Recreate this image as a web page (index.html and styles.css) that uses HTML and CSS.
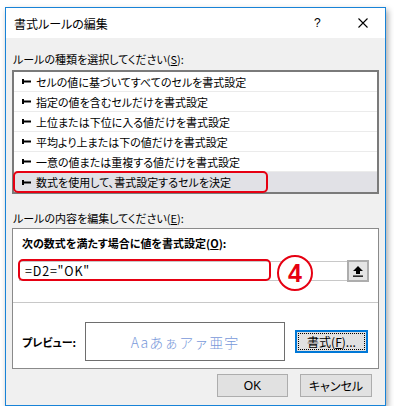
FILE: index.html
```html
<!DOCTYPE html>
<html lang="ja">
<head>
<meta charset="utf-8">
<link rel="stylesheet" href="styles.css">
</head>
<body>
<div class="dialog">
  <div class="titlebar">
    <span class="title">書式ルールの編集</span>
    <span class="help">?</span>
    <svg class="close" width="10" height="10" viewBox="0 0 10 10"><path d="M0.5 0.5L9.5 9.5M9.5 0.5L0.5 9.5" stroke="#000" stroke-width="1.1" fill="none"/></svg>
  </div>
  <div class="body">
    <div class="label">ルールの種類を選択してください(<u>S</u>):</div>
    <ul class="list">
      <li><svg class="mk" width="9" height="7" viewBox="0 0 9 7"><rect x="0" y="1" width="2" height="5"/><rect x="0" y="2.5" width="9" height="2"/></svg>セルの値に基づいてすべてのセルを書式設定</li>
      <li><svg class="mk" width="9" height="7" viewBox="0 0 9 7"><rect x="0" y="1" width="2" height="5"/><rect x="0" y="2.5" width="9" height="2"/></svg>指定の値を含むセルだけを書式設定</li>
      <li><svg class="mk" width="9" height="7" viewBox="0 0 9 7"><rect x="0" y="1" width="2" height="5"/><rect x="0" y="2.5" width="9" height="2"/></svg>上位または下位に入る値だけを書式設定</li>
      <li><svg class="mk" width="9" height="7" viewBox="0 0 9 7"><rect x="0" y="1" width="2" height="5"/><rect x="0" y="2.5" width="9" height="2"/></svg>平均より上または下の値だけを書式設定</li>
      <li><svg class="mk" width="9" height="7" viewBox="0 0 9 7"><rect x="0" y="1" width="2" height="5"/><rect x="0" y="2.5" width="9" height="2"/></svg>一意の値または重複する値だけを書式設定</li>
      <li class="sel"><svg class="mk" width="9" height="7" viewBox="0 0 9 7"><rect x="0" y="1" width="2" height="5"/><rect x="0" y="2.5" width="9" height="2"/></svg>数式を使用して、書式設定するセルを決定</li>
    </ul>
    <div class="label label2">ルールの内容を編集してください(<u>E</u>):</div>
    <div class="editor">
      <div class="bold head">次の数式を満たす場合に値を書式設定(<u>O</u>):</div>
      <div class="formula">
        <div class="input">=D2="OK"</div>
        <div class="ref"><svg width="10" height="11" viewBox="0 0 10 11"><path d="M5 0L10 5H7V8H3V5H0Z" fill="#000"/><rect x="0" y="9.5" width="10" height="1.3" fill="#000"/></svg></div>
      </div>
      <div class="sep"></div>
      <div class="preview-row">
        <span class="bold plabel">プレビュー:</span>
        <div class="preview">Aaあぁアァ亜宇</div>
        <div class="btn fmt"><span class="focus">書式(<u>F</u>)...</span></div>
      </div>
    </div>
    <div class="buttons">
      <div class="btn ok">OK</div>
      <div class="btn cancel">キャンセル</div>
    </div>
  </div>
  <div class="hl hl1"></div>
  <div class="hl hl2"></div>
  <div class="badge">4</div>
</div>
</body>
</html>
```
FILE: styles.css
```css
* { box-sizing: border-box; }
html, body { margin: 0; padding: 0; background: #fff; }
body {
  font-family: "Noto Sans CJK JP", "Noto Sans", sans-serif;
  font-size: 11px;
  color: #000;
  font-feature-settings: "palt";
}
.dialog {
  position: relative;
  margin: 7px 0 0 5px;
  width: 381px;
  height: 399px;
  border: 1px solid #1883d7;
  background: #f0f0f0;
  box-shadow: 2px 3px 6px rgba(0,0,0,.35);
  display: flex;
  flex-direction: column;
}
.titlebar {
  height: 30px;
  background: #fff;
  display: flex;
  align-items: center;
  padding-left: 8px;
}
.title { flex: 1; font-size: 12px; }
.help { width: 8px; margin-right: 36px; font-size: 12px; font-family: "Liberation Sans", sans-serif; }
.close { margin-right: 17px; }
.body { flex: 1; padding: 0 6px; display: flex; flex-direction: column; }
.label { margin-top: 11px; height: 20px; line-height: 20px; padding-left: 1px; }
.label2 { margin-top: 14px; }
.list {
  list-style: none;
  margin: 1px 0 0;
  padding: 0;
  height: 124px;
  border: 2px solid #7a7a7a;
  background: #fff;
}
.list li {
  height: 20px;
  display: flex;
  align-items: center;
  padding-left: 8px;
  border-bottom: 1px solid #ebebeb;
}
.list li.sel { border-bottom: none; background: #e1e1e6; }
.mk { margin-right: 5px; flex: none; }
.editor {
  height: 141px;
  border: 1px solid #8a8a8a;
  background: #fff;
  display: flex;
  flex-direction: column;
}
.bold { font-weight: bold; }
.head { margin-top: 4px; height: 20px; line-height: 20px; padding-left: 9px; }
.formula { margin-top: 7px; display: flex; align-items: center; padding-left: 6px; }
.input {
  width: 328px;
  height: 20px;
  border: 1px solid #c8c8c8;
  border-right: none;
  padding-left: 5px;
  line-height: 18px;
  font-size: 12.5px;
  letter-spacing: 0.8px;
  font-family: "Noto Sans CJK JP", sans-serif;
  font-feature-settings: normal;
}
.ref {
  width: 22px;
  height: 22px;
  border: 2px solid #adadad;
  background: #e5e5e5;
  display: flex;
  align-items: center;
  justify-content: center;
}
.sep { margin-top: 20px; height: 1px; background: #c8c8c8; }
.preview-row { margin-top: 19px; display: flex; align-items: center; padding-left: 9px; }
.plabel { width: 63px; }
.preview {
  width: 200px;
  height: 39px;
  border: 1px solid #6e6e6e;
  display: flex;
  align-items: center;
  justify-content: center;
  color: #7898da;
  font-size: 14px;
  font-weight: 300;
  letter-spacing: 1px;
  font-feature-settings: normal;
}
.btn {
  height: 23px;
  border: 1px solid #adadad;
  background: #e1e1e1;
  display: flex;
  align-items: center;
  justify-content: center;
  font-size: 12px;
}
.fmt {
  margin-left: 10px;
  width: 73px;
  border: 2px solid #0078d7;
  padding: 1px;
}
.focus {
  flex: 1;
  height: 100%;
  border: 1px dotted #000;
  display: flex;
  align-items: center;
  justify-content: center;
}
.buttons { margin-top: 5px; display: flex; justify-content: flex-end; gap: 12px; padding-right: 7px; }
.ok { width: 71px; font-family: "Liberation Sans", sans-serif; }
.cancel { width: 72px; }
.hl {
  position: absolute;
  border: 2.5px solid #e60012;
  border-radius: 5px;
}
.hl1 { left: 7px; top: 163px; width: 255px; height: 22px; }
.hl2 { left: 12px; top: 251px; width: 253px; height: 22px; }
.badge {
  position: absolute;
  left: 271px;
  top: 247px;
  width: 36px;
  height: 36px;
  border: 2.5px solid #e60012;
  border-radius: 50%;
  background: #fff;
  color: #e60012;
  font: bold 25px "Liberation Sans", sans-serif;
  display: flex;
  align-items: center;
  justify-content: center;
}
```
